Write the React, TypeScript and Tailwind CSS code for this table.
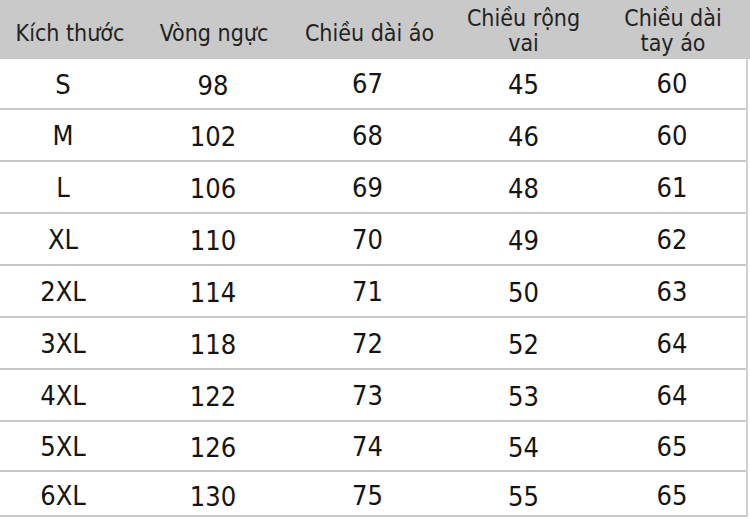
import React from "react";

const rows: { s: string; v: string[]; h: string }[] = [
  { s: "S", v: ["98", "67", "45", "60"], h: "h-[51px]" },
  { s: "M", v: ["102", "68", "46", "60"], h: "h-[52px]" },
  { s: "L", v: ["106", "69", "48", "61"], h: "h-[52px]" },
  { s: "XL", v: ["110", "70", "49", "62"], h: "h-[52px]" },
  { s: "2XL", v: ["114", "71", "50", "63"], h: "h-[52px]" },
  { s: "3XL", v: ["118", "72", "52", "64"], h: "h-[52px]" },
  { s: "4XL", v: ["122", "73", "53", "64"], h: "h-[52px]" },
  { s: "5XL", v: ["126", "74", "54", "65"], h: "h-[50px]" },
  { s: "6XL", v: ["130", "75", "55", "65"], h: "h-[45px]" },
];

const cols = "grid grid-cols-[140px_152px_155px_153px_150px]";

export default function App() {
  return (
    <div className="w-[750px] h-[519px] overflow-hidden bg-white font-['DejaVu_Sans_Condensed','DejaVu_Sans',sans-serif] text-[#141414]">
      <div className={`${cols} h-[59px] bg-[#c9c9c9] text-[23px] leading-[25px] text-[#222]`}>
        <div className="flex items-center justify-center pt-[7px]">Kích thước</div>
        <div className="flex items-center justify-center pt-[7px] pr-[4px]">Vòng ngực</div>
        <div className="flex items-center justify-center pt-[7px]">Chiều dài áo</div>
        <div className="flex flex-col items-center justify-center pt-[2px]">
          <span>Chiều rộng</span>
          <span>vai</span>
        </div>
        <div className="flex flex-col items-center justify-center pt-[2px] pr-[4px]">
          <span>Chiều dài</span>
          <span>tay áo</span>
        </div>
      </div>
      <div className="ml-[3px] w-[745px] border-r-2 border-[#d0d0d0]">
        {rows.map((r) => (
          <div
            key={r.s}
            className={`${cols} -ml-[3px] ${r.h} border-b-2 border-[#c8c8c8] text-[27px]`}
          >
            <div className="flex items-center justify-center pr-[14px] pt-[3px]">{r.s}</div>
            <div className="flex items-center justify-center pr-[6px] pt-[5px]">{r.v[0]}</div>
            <div className="flex items-center justify-center pr-[4px] pt-[2px]">{r.v[1]}</div>
            <div className="flex items-center justify-center pt-[4px]">{r.v[2]}</div>
            <div className="flex items-center justify-center pr-[6px] pt-[2px]">{r.v[3]}</div>
          </div>
        ))}
      </div>
    </div>
  );
}
